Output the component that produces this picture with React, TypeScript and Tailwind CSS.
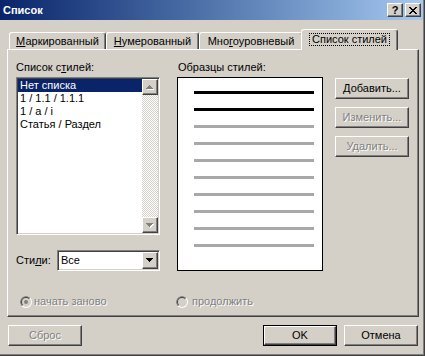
import React from 'react';

const raised =
  'border border-t-white border-l-white border-r-[#404040] border-b-[#404040] shadow-[inset_-1px_-1px_#808080] bg-[#d4d0c8]';
const sunken =
  'border border-t-[#808080] border-l-[#808080] border-r-white border-b-white shadow-[inset_1px_1px_#404040,inset_-1px_-1px_#d4d0c8]';
const grayText = 'text-[#808080] [text-shadow:1px_1px_0_#ffffff]';

function Arrow({ dir, color, shadow }: { dir: 'up' | 'down'; color: string; shadow?: boolean }) {
  const rows = [7, 5, 3, 1];
  const ordered = dir === 'up' ? [...rows].reverse() : rows;
  return (
    <svg width="8" height="5" viewBox="0 0 8 5" shapeRendering="crispEdges">
      {shadow &&
        ordered.map((w, i) => (
          <rect key={'s' + i} x={(7 - w) / 2 + 1} y={i + 1} width={w} height={1} fill="#ffffff" />
        ))}
      {ordered.map((w, i) => (
        <rect key={i} x={(7 - w) / 2} y={i} width={w} height={1} fill={color} />
      ))}
    </svg>
  );
}

function Radio({ checked }: { checked?: boolean }) {
  return (
    <svg width="12" height="12" viewBox="0 0 12 12">
      <circle cx="6" cy="6" r="6" fill="#ffffff" />
      <path d="M1.757 10.243 A6 6 0 0 1 10.243 1.757 Z" fill="#808080" />
      <circle cx="6" cy="6" r="5" fill="#d4d0c8" />
      <path d="M2.464 9.536 A5 5 0 0 1 9.536 2.464 Z" fill="#404040" />
      <circle cx="6" cy="6" r="4" fill="#d4d0c8" />
      {checked && <circle cx="6" cy="6" r="2" fill="#808080" />}
    </svg>
  );
}

function Button({
  children,
  disabled,
  isDefault,
}: {
  children: React.ReactNode;
  disabled?: boolean;
  isDefault?: boolean;
}) {
  return (
    <div className={`h-[21px] w-[74px] flex ${isDefault ? 'border border-black' : ''}`}>
      <div className={`flex-1 flex items-center justify-center ${raised} ${disabled ? grayText : 'text-black'}`}>
        {children}
      </div>
    </div>
  );
}

function Tab({ label, width, selected }: { label: React.ReactNode; width: number; selected?: boolean }) {
  const base =
    'flex items-center justify-center border-t border-l border-r border-t-white border-l-white border-r-[#404040] rounded-t-[3px] bg-[#d4d0c8] shadow-[inset_-1px_0_#808080]';
  if (selected) {
    return (
      <div className={`${base} h-[21px] mb-[-1px] ml-[-2px] relative z-10 pb-[2px]`} style={{ width }}>
        <span className="border border-dotted border-black px-[2px] leading-[11px] h-[13px] flex items-center">{label}</span>
      </div>
    );
  }
  return (
    <div className={`${base} h-[17px]`} style={{ width }}>
      {label}
    </div>
  );
}

const u = 'underline underline-offset-[1px] decoration-1';

export default function App() {
  return (
    <div className="w-[425px] h-[356px] bg-[#d4d0c8] flex flex-col border-r border-b border-[#404040] shadow-[inset_-1px_-1px_#808080] font-['Liberation_Sans',Arial,sans-serif] text-[11px] leading-[13px] text-black overflow-hidden">
      {/* title bar */}
      <div className="h-[20px] mr-[1px] bg-linear-to-r from-[#0a246a] to-[#a6caf0] flex items-center pl-[3px] pr-[2px]">
        <span className="text-white font-bold text-[11px] flex-1">Список</span>
        <div className={`w-[16px] h-[14px] flex items-center justify-center ${raised} font-bold text-[11px] leading-[10px]`}>?</div>
        <div className={`w-[16px] h-[14px] ml-[2px] flex items-center justify-center ${raised}`}>
          <svg width="8" height="7" viewBox="0 0 8 7" shapeRendering="crispEdges">
            <path d="M0 0h2v1h-2zM6 0h2v1h-2zM1 1h2v1h-2zM5 1h2v1h-2zM2 2h4v1h-4zM3 3h2v1h-2zM2 4h4v1h-4zM1 5h2v1h-2zM5 5h2v1h-2zM0 6h2v1h-2zM6 6h2v1h-2z" fill="#000" />
          </svg>
        </div>
      </div>

      {/* tabs */}
      <div className="mt-[9px] h-[20px] flex items-end pl-[9px]">
        <Tab width={97} label={<span><span className={u}>М</span>аркированный</span>} />
        <Tab width={93} label={<span><span className={u}>Н</span>умерованный</span>} />
        <Tab width={104} label={<span>Мно<span className={u}>г</span>оуровневый</span>} />
        <Tab width={97} selected label={<span>Список стилей</span>} />
      </div>

      {/* tab panel */}
      <div className={`ml-[7px] w-[412px] h-[268px] ${raised} pt-[11px] pl-[8px] flex flex-col`}>
        <div className="flex h-[210px]">
          {/* left column */}
          <div className="w-[144px] flex flex-col">
            <div className="h-[13px]">
              Список с<span className={u}>т</span>илей:
            </div>
            <div className={`mt-[3px] h-[158px] bg-white ${sunken} p-[1px] flex`}>
              <div className="flex-1 flex flex-col">
                <div className="h-[13px] bg-[#0a246a] text-white pl-[2px]">Нет списка</div>
                <div className="h-[13px] pl-[2px]">1 / 1.1 / 1.1.1</div>
                <div className="h-[13px] pl-[2px]">1 / a / i</div>
                <div className="h-[13px] pl-[2px]">Статья / Раздел</div>
              </div>
              <div className="w-[16px] flex flex-col">
                <div className={`h-[16px] flex items-center justify-center ${raised}`}>
                  <Arrow dir="up" color="#808080" shadow />
                </div>
                <div className="flex-1 bg-[image:repeating-conic-gradient(#d4d0c8_0%_25%,#ffffff_0%_50%)] bg-[length:2px_2px]" />
                <div className={`h-[16px] flex items-center justify-center ${raised}`}>
                  <Arrow dir="down" color="#808080" shadow />
                </div>
              </div>
            </div>
            <div className="mt-[15px] h-[21px] flex items-center">
              <span className="w-[41px]">
                Сти<span className={u}>л</span>и:
              </span>
              <div className={`w-[103px] h-[21px] bg-white ${sunken} p-[1px] flex`}>
                <div className="flex-1 pl-[2px] flex items-center">Все</div>
                <div className={`w-[16px] flex items-center justify-center ${raised}`}>
                  <Arrow dir="down" color="#000000" />
                </div>
              </div>
            </div>
          </div>

          {/* middle column */}
          <div className="ml-[17px] w-[146px] flex flex-col">
            <div className="h-[13px] pl-[1px]">Образцы стилей:</div>
            <div className="mt-[3px] h-[194px] bg-white border border-black pt-[13px] pl-[16px] flex flex-col gap-[14px]">
              <div className="w-[120px] h-[3px] bg-black" />
              <div className="w-[120px] h-[3px] bg-black" />
              {[0, 1, 2, 3, 4, 5, 6, 7].map((i) => (
                <div key={i} className="w-[120px] h-[3px] bg-[#a8a8a8]" />
              ))}
            </div>
          </div>

          {/* right column */}
          <div className="ml-[12px] pt-[17px] flex flex-col gap-[8px]">
            <Button>
              <span>
                <span className={u}>Д</span>обавить...
              </span>
            </Button>
            <Button disabled>Изменить...</Button>
            <Button disabled>Удалить...</Button>
          </div>
        </div>

        {/* radios */}
        <div className="mt-[24px] h-[13px] flex items-center">
          <div className="ml-[4px] w-[156px] flex items-center">
            <Radio checked />
            <span className={`ml-[2px] ${grayText}`}>начать заново</span>
          </div>
          <div className="flex items-center">
            <Radio />
            <span className={`ml-[4px] ${grayText}`}>продолжить</span>
          </div>
        </div>
      </div>

      {/* bottom buttons */}
      <div className="mt-[8px] flex pl-[8px]">
        <Button disabled>Сброс</Button>
        <div className="ml-[181px]">
          <Button isDefault>OK</Button>
        </div>
        <div className="ml-[7px]">
          <Button>Отмена</Button>
        </div>
      </div>
    </div>
  );
}
